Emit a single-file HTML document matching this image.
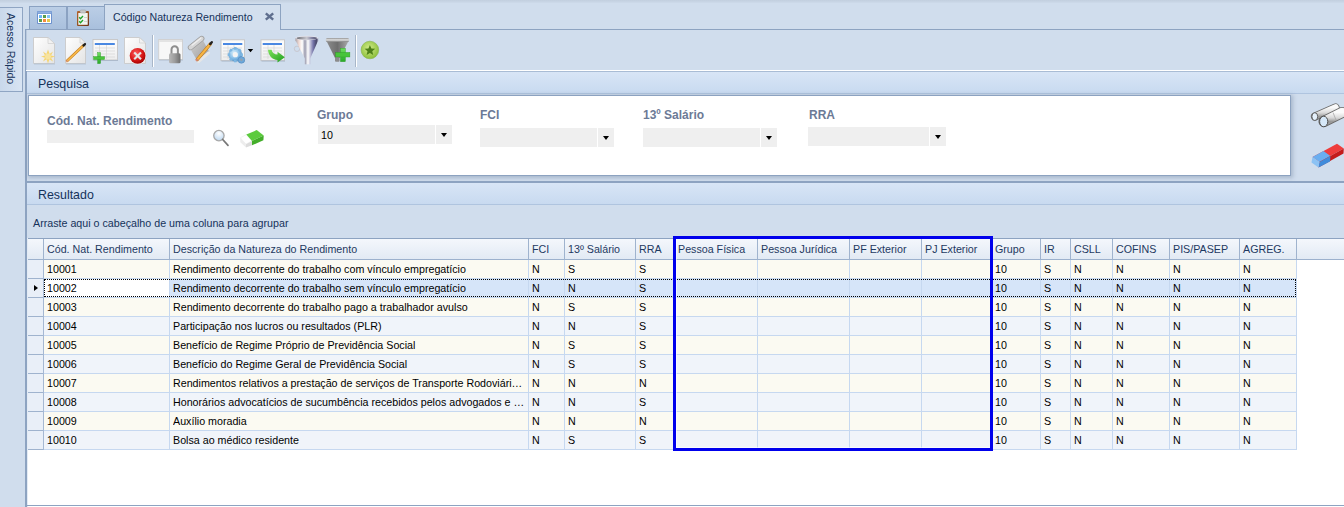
<!DOCTYPE html>
<html><head><meta charset="utf-8">
<style>
*{box-sizing:border-box;margin:0;padding:0}
html,body{width:1344px;height:507px;overflow:hidden}
body{position:relative;background:#D0DDED;font-family:"Liberation Sans",sans-serif;font-size:11px;color:#000}
.a{position:absolute}
.topline{left:0;top:0;width:1344px;height:3px;background:linear-gradient(#C2CFDF,#C7D4E4 50%,#CDDAEA)}
/* left quick access tab */
#qa{left:0;top:7px;width:23px;height:85px;border:1px solid #8FA5C3;border-left:none;background:linear-gradient(90deg,#C9D8EB,#D8E4F3)}
#qa span{position:absolute;left:5px;top:5px;transform-origin:0 0;transform:translate(12px,0) rotate(90deg);white-space:nowrap;color:#15325A;font-size:10.6px;line-height:12px}
/* tabs */
.tab{top:6px;height:23px;border:1px solid #8BA2C2;border-bottom:none;background:linear-gradient(#BBCEE6,#A9C0DD)}
#tab3{left:104px;top:4px;width:177px;height:26px;border:1px solid #8DA3C1;border-bottom:none;background:#D3DFEE}
#tab3 .t{position:absolute;left:8px;top:6px;color:#15325A;font-size:10.6px;line-height:12px;white-space:nowrap}
/* main panel */
#main{left:25px;top:29px;width:1319px;height:478px;border-left:1px solid #8DA3C1;border-top:1px solid #8DA3C1}
#main2{left:26px;top:71px;width:1px;height:436px;background:#8DA3C1}
#main3{left:26px;top:30px;width:1px;height:40px;background:#B9C9DD}
#tbline{left:26px;top:70px;width:1318px;height:1px;background:#fff}
#tbline2{left:27px;top:71px;width:1317px;height:1px;background:#A9BCD5}
.grphdr{height:22px;background:linear-gradient(#D8E5F6,#C8DAF0);border-bottom:1px solid #AFC4DF}
.grphdr span{position:absolute;left:11px;top:5px;font-size:12.4px;color:#15325A;line-height:14px}

.ghdr{background:linear-gradient(#F4F7FC,#E2EAF4);border-top:1px solid #8DA3C1;border-bottom:1px solid #9CB1CD}
.hsep{width:1px;background:#9FB3CE}
.htx{height:20px;line-height:20px;font-size:10.7px;color:#1E3961;white-space:nowrap}
.ind{width:15px;height:18px;background:#E9EFF8}
.iln{width:15px;height:1px;background:#9FB3CE}
.rln{width:1252px;height:1px;background:#C6D8F0}
.vln{width:1px;height:190px;background:#C6D8F0}
.ctx{height:18px;line-height:18px;font-size:10.7px;color:#000;white-space:nowrap;overflow:hidden;text-overflow:ellipsis}
.arrow{width:0;height:0;border-top:3.5px solid transparent;border-bottom:3.5px solid transparent;border-left:4px solid #000}
.focus{border-top:1px dotted #000;border-bottom:1px dotted #000;border-right:1px dotted #000;border-left:1px dotted #000}

.lbl{font-size:12px;font-weight:bold;color:#6C7A96;white-space:nowrap;line-height:14px}
.inp{background:#EFEFEF}
.cbtn{background:#EFEFEF}
.carr{width:0;height:0;border-left:3px solid transparent;border-right:3px solid transparent;border-top:4px solid #000}
.ctx2{font-size:10.7px;line-height:14px;color:#000}
</style></head><body>
<div class="a topline"></div>
<div class="a" id="qa"><span>Acesso Rápido</span></div>

<div class="a tab" style="left:29px;width:38px;border-right:1px solid #8BA2C2"></div>
<div class="a tab" style="left:67px;width:38px"></div>
<div class="a" id="main"></div><div class="a" id="main2"></div><div class="a" id="main3"></div>
<div class="a" id="tab3"><span class="t">Código Natureza Rendimento</span></div>
<div class="a" id="tbline"></div>
<div class="a" id="tbline2"></div>

<!-- Pesquisa -->
<div class="a grphdr" style="left:27px;top:72px;width:1317px"><span>Pesquisa</span></div>
<div class="a" style="left:28px;top:95px;width:1263px;height:81px;background:#fff;border:1px solid #8CA2C0;box-shadow:1px 1px 4px 1px rgba(120,138,165,0.45)"></div>
<div class="a" style="left:25px;top:181px;width:1319px;height:2px;background:#8DA3C1"></div>


<div class="a lbl" style="left:47px;top:114px">Cód. Nat. Rendimento</div>
<div class="a inp" style="left:47px;top:130px;width:147px;height:13px"></div>
<div class="a lbl" style="left:317px;top:108px">Grupo</div>
<div class="a inp" style="left:318px;top:125px;width:117px;height:19px"></div>
<div class="a cbtn" style="left:436px;top:125px;width:16px;height:19px"></div>
<div class="a carr" style="left:441px;top:133px"></div>
<div class="a ctx2" style="left:321px;top:128px">10</div>
<div class="a lbl" style="left:480px;top:108px">FCI</div>
<div class="a inp" style="left:480px;top:128px;width:117px;height:19px"></div>
<div class="a cbtn" style="left:598px;top:128px;width:16px;height:19px"></div>
<div class="a carr" style="left:603px;top:136px"></div>
<div class="a lbl" style="left:643px;top:108px">13º Salário</div>
<div class="a inp" style="left:643px;top:128px;width:117px;height:19px"></div>
<div class="a cbtn" style="left:761px;top:128px;width:16px;height:19px"></div>
<div class="a carr" style="left:766px;top:136px"></div>
<div class="a lbl" style="left:809px;top:108px">RRA</div>
<div class="a inp" style="left:808px;top:127px;width:121px;height:19px"></div>
<div class="a cbtn" style="left:930px;top:127px;width:16px;height:19px"></div>
<div class="a carr" style="left:935px;top:135px"></div>

<!-- Resultado -->
<div class="a grphdr" style="left:27px;top:183px;width:1317px"><span>Resultado</span></div>
<div class="a" style="left:33px;top:217px;font-size:10.7px;color:#15325A;white-space:nowrap">Arraste aqui o cabeçalho de uma coluna para agrupar</div>
<div class="a" style="left:27px;top:238px;width:1317px;height:269px;background:#fff;border-left:1px solid #E3EBF5"></div>
<div class="a" style="left:25px;top:505px;width:1319px;height:1px;background:#8DA3C1"></div>
<div class="a ghdr" style="left:28px;top:238px;width:1316px;height:22px"></div>
<div class="a hsep" style="left:43px;top:239px;height:20px"></div>
<div class="a hsep" style="left:169px;top:239px;height:20px"></div>
<div class="a htx" style="left:47px;top:239px">Cód. Nat. Rendimento</div>
<div class="a hsep" style="left:528px;top:239px;height:20px"></div>
<div class="a htx" style="left:173px;top:239px">Descrição da Natureza do Rendimento</div>
<div class="a hsep" style="left:564px;top:239px;height:20px"></div>
<div class="a htx" style="left:532px;top:239px">FCI</div>
<div class="a hsep" style="left:635px;top:239px;height:20px"></div>
<div class="a htx" style="left:568px;top:239px">13º Salário</div>
<div class="a hsep" style="left:674px;top:239px;height:20px"></div>
<div class="a htx" style="left:639px;top:239px">RRA</div>
<div class="a hsep" style="left:757px;top:239px;height:20px"></div>
<div class="a htx" style="left:678px;top:239px">Pessoa Física</div>
<div class="a hsep" style="left:849px;top:239px;height:20px"></div>
<div class="a htx" style="left:761px;top:239px">Pessoa Jurídica</div>
<div class="a hsep" style="left:921px;top:239px;height:20px"></div>
<div class="a htx" style="left:853px;top:239px">PF Exterior</div>
<div class="a hsep" style="left:991px;top:239px;height:20px"></div>
<div class="a htx" style="left:925px;top:239px">PJ Exterior</div>
<div class="a hsep" style="left:1040px;top:239px;height:20px"></div>
<div class="a htx" style="left:995px;top:239px">Grupo</div>
<div class="a hsep" style="left:1070px;top:239px;height:20px"></div>
<div class="a htx" style="left:1044px;top:239px">IR</div>
<div class="a hsep" style="left:1112px;top:239px;height:20px"></div>
<div class="a htx" style="left:1074px;top:239px">CSLL</div>
<div class="a hsep" style="left:1169px;top:239px;height:20px"></div>
<div class="a htx" style="left:1116px;top:239px">COFINS</div>
<div class="a hsep" style="left:1239px;top:239px;height:20px"></div>
<div class="a htx" style="left:1173px;top:239px">PIS/PASEP</div>
<div class="a hsep" style="left:1296px;top:239px;height:20px"></div>
<div class="a htx" style="left:1243px;top:239px">AGREG.</div>
<div class="a" style="left:44px;top:260px;width:1252px;height:18px;background:#FBFAF2"></div>
<div class="a ind" style="left:28px;top:260px"></div>
<div class="a iln" style="left:28px;top:278px"></div>
<div class="a rln" style="left:44px;top:278px"></div>
<div class="a ctx" style="left:47px;top:260px;width:121px">10001</div>
<div class="a ctx" style="left:173px;top:260px;width:354px">Rendimento decorrente do trabalho com vínculo empregatício</div>
<div class="a ctx" style="left:532px;top:260px;width:31px">N</div>
<div class="a ctx" style="left:568px;top:260px;width:66px">S</div>
<div class="a ctx" style="left:639px;top:260px;width:34px">S</div>
<div class="a ctx" style="left:995px;top:260px;width:44px">10</div>
<div class="a ctx" style="left:1044px;top:260px;width:25px">S</div>
<div class="a ctx" style="left:1074px;top:260px;width:37px">N</div>
<div class="a ctx" style="left:1116px;top:260px;width:52px">N</div>
<div class="a ctx" style="left:1173px;top:260px;width:65px">N</div>
<div class="a ctx" style="left:1243px;top:260px;width:52px">N</div>
<div class="a" style="left:44px;top:279px;width:1252px;height:18px;background:#D6E5F9"></div>
<div class="a ind" style="left:28px;top:279px"></div>
<div class="a iln" style="left:28px;top:297px"></div>
<div class="a rln" style="left:44px;top:297px"></div>
<div class="a" style="left:44px;top:279px;width:125px;height:18px;background:#fff"></div>
<div class="a arrow" style="left:34px;top:285px"></div>
<div class="a ctx" style="left:47px;top:279px;width:121px">10002</div>
<div class="a ctx" style="left:173px;top:279px;width:354px">Rendimento decorrente do trabalho sem vínculo empregatício</div>
<div class="a ctx" style="left:532px;top:279px;width:31px">N</div>
<div class="a ctx" style="left:568px;top:279px;width:66px">N</div>
<div class="a ctx" style="left:639px;top:279px;width:34px">S</div>
<div class="a ctx" style="left:995px;top:279px;width:44px">10</div>
<div class="a ctx" style="left:1044px;top:279px;width:25px">S</div>
<div class="a ctx" style="left:1074px;top:279px;width:37px">N</div>
<div class="a ctx" style="left:1116px;top:279px;width:52px">N</div>
<div class="a ctx" style="left:1173px;top:279px;width:65px">N</div>
<div class="a ctx" style="left:1243px;top:279px;width:52px">N</div>
<div class="a" style="left:44px;top:298px;width:1252px;height:18px;background:#FBFAF2"></div>
<div class="a ind" style="left:28px;top:298px"></div>
<div class="a iln" style="left:28px;top:316px"></div>
<div class="a rln" style="left:44px;top:316px"></div>
<div class="a ctx" style="left:47px;top:298px;width:121px">10003</div>
<div class="a ctx" style="left:173px;top:298px;width:354px">Rendimento decorrente do trabalho pago a trabalhador avulso</div>
<div class="a ctx" style="left:532px;top:298px;width:31px">N</div>
<div class="a ctx" style="left:568px;top:298px;width:66px">S</div>
<div class="a ctx" style="left:639px;top:298px;width:34px">S</div>
<div class="a ctx" style="left:995px;top:298px;width:44px">10</div>
<div class="a ctx" style="left:1044px;top:298px;width:25px">S</div>
<div class="a ctx" style="left:1074px;top:298px;width:37px">N</div>
<div class="a ctx" style="left:1116px;top:298px;width:52px">N</div>
<div class="a ctx" style="left:1173px;top:298px;width:65px">N</div>
<div class="a ctx" style="left:1243px;top:298px;width:52px">N</div>
<div class="a" style="left:44px;top:317px;width:1252px;height:18px;background:#F0F4FA"></div>
<div class="a ind" style="left:28px;top:317px"></div>
<div class="a iln" style="left:28px;top:335px"></div>
<div class="a rln" style="left:44px;top:335px"></div>
<div class="a ctx" style="left:47px;top:317px;width:121px">10004</div>
<div class="a ctx" style="left:173px;top:317px;width:354px">Participação nos lucros ou resultados (PLR)</div>
<div class="a ctx" style="left:532px;top:317px;width:31px">N</div>
<div class="a ctx" style="left:568px;top:317px;width:66px">N</div>
<div class="a ctx" style="left:639px;top:317px;width:34px">S</div>
<div class="a ctx" style="left:995px;top:317px;width:44px">10</div>
<div class="a ctx" style="left:1044px;top:317px;width:25px">S</div>
<div class="a ctx" style="left:1074px;top:317px;width:37px">N</div>
<div class="a ctx" style="left:1116px;top:317px;width:52px">N</div>
<div class="a ctx" style="left:1173px;top:317px;width:65px">N</div>
<div class="a ctx" style="left:1243px;top:317px;width:52px">N</div>
<div class="a" style="left:44px;top:336px;width:1252px;height:18px;background:#FBFAF2"></div>
<div class="a ind" style="left:28px;top:336px"></div>
<div class="a iln" style="left:28px;top:354px"></div>
<div class="a rln" style="left:44px;top:354px"></div>
<div class="a ctx" style="left:47px;top:336px;width:121px">10005</div>
<div class="a ctx" style="left:173px;top:336px;width:354px">Benefício de Regime Próprio de Previdência Social</div>
<div class="a ctx" style="left:532px;top:336px;width:31px">N</div>
<div class="a ctx" style="left:568px;top:336px;width:66px">S</div>
<div class="a ctx" style="left:639px;top:336px;width:34px">S</div>
<div class="a ctx" style="left:995px;top:336px;width:44px">10</div>
<div class="a ctx" style="left:1044px;top:336px;width:25px">S</div>
<div class="a ctx" style="left:1074px;top:336px;width:37px">N</div>
<div class="a ctx" style="left:1116px;top:336px;width:52px">N</div>
<div class="a ctx" style="left:1173px;top:336px;width:65px">N</div>
<div class="a ctx" style="left:1243px;top:336px;width:52px">N</div>
<div class="a" style="left:44px;top:355px;width:1252px;height:18px;background:#F0F4FA"></div>
<div class="a ind" style="left:28px;top:355px"></div>
<div class="a iln" style="left:28px;top:373px"></div>
<div class="a rln" style="left:44px;top:373px"></div>
<div class="a ctx" style="left:47px;top:355px;width:121px">10006</div>
<div class="a ctx" style="left:173px;top:355px;width:354px">Benefício do Regime Geral de Previdência Social</div>
<div class="a ctx" style="left:532px;top:355px;width:31px">N</div>
<div class="a ctx" style="left:568px;top:355px;width:66px">S</div>
<div class="a ctx" style="left:639px;top:355px;width:34px">S</div>
<div class="a ctx" style="left:995px;top:355px;width:44px">10</div>
<div class="a ctx" style="left:1044px;top:355px;width:25px">S</div>
<div class="a ctx" style="left:1074px;top:355px;width:37px">N</div>
<div class="a ctx" style="left:1116px;top:355px;width:52px">N</div>
<div class="a ctx" style="left:1173px;top:355px;width:65px">N</div>
<div class="a ctx" style="left:1243px;top:355px;width:52px">N</div>
<div class="a" style="left:44px;top:374px;width:1252px;height:18px;background:#FBFAF2"></div>
<div class="a ind" style="left:28px;top:374px"></div>
<div class="a iln" style="left:28px;top:392px"></div>
<div class="a rln" style="left:44px;top:392px"></div>
<div class="a ctx" style="left:47px;top:374px;width:121px">10007</div>
<div class="a ctx" style="left:173px;top:374px;width:354px">Rendimentos relativos a prestação de serviços de Transporte Rodoviário Internacional de Carga</div>
<div class="a ctx" style="left:532px;top:374px;width:31px">N</div>
<div class="a ctx" style="left:568px;top:374px;width:66px">N</div>
<div class="a ctx" style="left:639px;top:374px;width:34px">N</div>
<div class="a ctx" style="left:995px;top:374px;width:44px">10</div>
<div class="a ctx" style="left:1044px;top:374px;width:25px">S</div>
<div class="a ctx" style="left:1074px;top:374px;width:37px">N</div>
<div class="a ctx" style="left:1116px;top:374px;width:52px">N</div>
<div class="a ctx" style="left:1173px;top:374px;width:65px">N</div>
<div class="a ctx" style="left:1243px;top:374px;width:52px">N</div>
<div class="a" style="left:44px;top:393px;width:1252px;height:18px;background:#F0F4FA"></div>
<div class="a ind" style="left:28px;top:393px"></div>
<div class="a iln" style="left:28px;top:411px"></div>
<div class="a rln" style="left:44px;top:411px"></div>
<div class="a ctx" style="left:47px;top:393px;width:121px">10008</div>
<div class="a ctx" style="left:173px;top:393px;width:354px">Honorários advocatícios de sucumbência recebidos pelos advogados e procuradores</div>
<div class="a ctx" style="left:532px;top:393px;width:31px">N</div>
<div class="a ctx" style="left:568px;top:393px;width:66px">N</div>
<div class="a ctx" style="left:639px;top:393px;width:34px">S</div>
<div class="a ctx" style="left:995px;top:393px;width:44px">10</div>
<div class="a ctx" style="left:1044px;top:393px;width:25px">S</div>
<div class="a ctx" style="left:1074px;top:393px;width:37px">N</div>
<div class="a ctx" style="left:1116px;top:393px;width:52px">N</div>
<div class="a ctx" style="left:1173px;top:393px;width:65px">N</div>
<div class="a ctx" style="left:1243px;top:393px;width:52px">N</div>
<div class="a" style="left:44px;top:412px;width:1252px;height:18px;background:#FBFAF2"></div>
<div class="a ind" style="left:28px;top:412px"></div>
<div class="a iln" style="left:28px;top:430px"></div>
<div class="a rln" style="left:44px;top:430px"></div>
<div class="a ctx" style="left:47px;top:412px;width:121px">10009</div>
<div class="a ctx" style="left:173px;top:412px;width:354px">Auxílio moradia</div>
<div class="a ctx" style="left:532px;top:412px;width:31px">N</div>
<div class="a ctx" style="left:568px;top:412px;width:66px">N</div>
<div class="a ctx" style="left:639px;top:412px;width:34px">N</div>
<div class="a ctx" style="left:995px;top:412px;width:44px">10</div>
<div class="a ctx" style="left:1044px;top:412px;width:25px">S</div>
<div class="a ctx" style="left:1074px;top:412px;width:37px">N</div>
<div class="a ctx" style="left:1116px;top:412px;width:52px">N</div>
<div class="a ctx" style="left:1173px;top:412px;width:65px">N</div>
<div class="a ctx" style="left:1243px;top:412px;width:52px">N</div>
<div class="a" style="left:44px;top:431px;width:1252px;height:18px;background:#F0F4FA"></div>
<div class="a ind" style="left:28px;top:431px"></div>
<div class="a iln" style="left:28px;top:449px"></div>
<div class="a rln" style="left:44px;top:449px"></div>
<div class="a ctx" style="left:47px;top:431px;width:121px">10010</div>
<div class="a ctx" style="left:173px;top:431px;width:354px">Bolsa ao médico residente</div>
<div class="a ctx" style="left:532px;top:431px;width:31px">N</div>
<div class="a ctx" style="left:568px;top:431px;width:66px">S</div>
<div class="a ctx" style="left:639px;top:431px;width:34px">S</div>
<div class="a ctx" style="left:995px;top:431px;width:44px">10</div>
<div class="a ctx" style="left:1044px;top:431px;width:25px">S</div>
<div class="a ctx" style="left:1074px;top:431px;width:37px">N</div>
<div class="a ctx" style="left:1116px;top:431px;width:52px">N</div>
<div class="a ctx" style="left:1173px;top:431px;width:65px">N</div>
<div class="a ctx" style="left:1243px;top:431px;width:52px">N</div>
<div class="a vln" style="left:169px;top:260px"></div>
<div class="a vln" style="left:528px;top:260px"></div>
<div class="a vln" style="left:564px;top:260px"></div>
<div class="a vln" style="left:635px;top:260px"></div>
<div class="a vln" style="left:674px;top:260px"></div>
<div class="a vln" style="left:757px;top:260px"></div>
<div class="a vln" style="left:849px;top:260px"></div>
<div class="a vln" style="left:921px;top:260px"></div>
<div class="a vln" style="left:991px;top:260px"></div>
<div class="a vln" style="left:1040px;top:260px"></div>
<div class="a vln" style="left:1070px;top:260px"></div>
<div class="a vln" style="left:1112px;top:260px"></div>
<div class="a vln" style="left:1169px;top:260px"></div>
<div class="a vln" style="left:1239px;top:260px"></div>
<div class="a vln" style="left:1296px;top:260px"></div>
<div class="a" style="left:43px;top:260px;width:1px;height:190px;background:#A5B8D3"></div>
<div class="a focus" style="left:44px;top:279px;width:1252px;height:18px"></div>
<div class="a" style="left:676px;top:239px;width:314px;height:209px;border-left:1px solid rgba(255,255,255,.6);border-bottom:1px solid rgba(255,255,255,.6)"></div>
<div class="a" style="left:673px;top:236px;width:320px;height:215px;border:3px solid #0000EC"></div>
<svg class="a" style="left:0;top:0;pointer-events:none" width="1344" height="507" viewBox="0 0 1344 507">
<defs>
 <linearGradient id="gdoc" x1="0" y1="0" x2="1" y2="1"><stop offset="0" stop-color="#FFFFFF"/><stop offset="1" stop-color="#E4E4E4"/></linearGradient>
 <linearGradient id="gtbl" x1="0" y1="0" x2="0" y2="1"><stop offset="0" stop-color="#F6F6F6"/><stop offset="0.15" stop-color="#FCFCFC"/><stop offset="1" stop-color="#EDEDED"/></linearGradient>
 <radialGradient id="gred" cx="0.4" cy="0.35" r="0.7"><stop offset="0" stop-color="#FF6060"/><stop offset="0.6" stop-color="#D81818"/><stop offset="1" stop-color="#9E0000"/></radialGradient>
 <linearGradient id="glock" x1="0" y1="0" x2="1" y2="0"><stop offset="0" stop-color="#B8B8B8"/><stop offset="0.5" stop-color="#9C9C9C"/><stop offset="1" stop-color="#6E6E6E"/></linearGradient>
 <linearGradient id="gscroll" x1="0" y1="0" x2="1" y2="1"><stop offset="0" stop-color="#D2D2D2"/><stop offset="1" stop-color="#9A9A9A"/></linearGradient>
 <radialGradient id="ggear" cx="0.4" cy="0.35" r="0.65"><stop offset="0" stop-color="#D8EEFA"/><stop offset="0.6" stop-color="#8CC2EA"/><stop offset="1" stop-color="#5A9AD0"/></radialGradient>
 <linearGradient id="garrow" x1="0" y1="0" x2="1" y2="1"><stop offset="0" stop-color="#7CE05A"/><stop offset="1" stop-color="#1E9E1E"/></linearGradient>
 <linearGradient id="gfun" gradientUnits="userSpaceOnUse" x1="295.4" y1="0" x2="318.2" y2="0"><stop offset="0" stop-color="#A8A2A8"/><stop offset="0.15" stop-color="#EED8D2"/><stop offset="0.3" stop-color="#FFFFFF"/><stop offset="0.42" stop-color="#9A9AAE"/><stop offset="0.55" stop-color="#FFFFFF"/><stop offset="0.78" stop-color="#7474A8"/><stop offset="0.92" stop-color="#48486A"/><stop offset="1" stop-color="#A0A0B8"/></linearGradient>
 <linearGradient id="gfun2" x1="0" y1="0" x2="1" y2="0"><stop offset="0" stop-color="#8A8A8A"/><stop offset="0.5" stop-color="#6E6E6E"/><stop offset="1" stop-color="#A8A8A8"/></linearGradient>
 <linearGradient id="gfun2t" x1="0" y1="0" x2="0" y2="1"><stop offset="0" stop-color="#8E8E8E"/><stop offset="0.5" stop-color="#E4E4E4"/><stop offset="1" stop-color="#7A7A7A"/></linearGradient>
 <radialGradient id="gstar" cx="0.45" cy="0.4" r="0.6"><stop offset="0" stop-color="#D2EC8A"/><stop offset="1" stop-color="#8CBF3A"/></radialGradient>
 <linearGradient id="gplus" x1="0" y1="0" x2="0" y2="1"><stop offset="0" stop-color="#6FE05F"/><stop offset="1" stop-color="#27A827"/></linearGradient>
 <linearGradient id="gclip" x1="0" y1="0" x2="1" y2="1"><stop offset="0" stop-color="#B4642E"/><stop offset="0.5" stop-color="#94501F"/><stop offset="1" stop-color="#6A3016"/></linearGradient>
 <radialGradient id="gmag" cx="0.5" cy="0.3" r="0.7"><stop offset="0" stop-color="#FFFFFF"/><stop offset="1" stop-color="#BCD8F2"/></radialGradient>
 <linearGradient id="gbin" x1="0" y1="0" x2="0" y2="1"><stop offset="0" stop-color="#FAFAFA"/><stop offset="0.6" stop-color="#D8D8D8"/><stop offset="1" stop-color="#9A9A9A"/></linearGradient>
<linearGradient id="grim" x1="0" y1="0" x2="1" y2="0"><stop offset="0" stop-color="#6A6A70"/><stop offset="0.5" stop-color="#C8C8D0"/><stop offset="0.75" stop-color="#8080A0"/><stop offset="1" stop-color="#505068"/></linearGradient>
</defs>

<!-- tab 1 icon: grid -->
<rect x="37" y="11" width="15" height="13" rx="1" fill="#6C92CE"/>
<rect x="37.5" y="11.5" width="14" height="2" fill="#8FB0E0"/>
<rect x="38" y="14" width="13" height="9" fill="#FFFFFF"/>
<rect x="39" y="15" width="3" height="3" fill="#6DB7F6"/>
<rect x="43" y="15" width="3" height="3" fill="#5A9E4E"/>
<rect x="47" y="15" width="3" height="3" fill="#82C4F6"/>
<rect x="39" y="19" width="3" height="3" fill="#5A9E4E"/>
<rect x="43" y="19" width="3" height="3" fill="#F58A3C"/>
<rect x="47" y="19" width="3" height="3" fill="#E5C84A"/>

<!-- tab 2 icon: clipboard -->
<rect x="77" y="11" width="12" height="15" rx="1" fill="url(#gclip)"/>
<rect x="78.3" y="13" width="9.4" height="11.8" fill="#F1F5F1"/>
<rect x="80" y="10" width="6" height="3" rx="1.2" fill="#C8C8C8" stroke="#9A9A9A" stroke-width="0.5"/>
<path d="M79.2,17.3 l1.3,1.4 l2.5,-2.6" stroke="#1FA22A" stroke-width="1.4" fill="none"/>
<path d="M79.2,21.3 l1.3,1.4 l2.5,-2.6" stroke="#1FA22A" stroke-width="1.4" fill="none"/>
<rect x="84" y="17" width="3" height="0.8" fill="#C8CCC8"/>
<rect x="84" y="21" width="3" height="0.8" fill="#C8CCC8"/>

<!-- close x -->
<path d="M265.8,13.4 L273.2,19.6 M273.2,13.4 L265.8,19.6" stroke="#5F6E8E" stroke-width="2.5"/>

<!-- 1 new doc -->
<path d="M33.5,37.5 H48 L54.5,43.5 V63.5 H33.5 Z" fill="url(#gdoc)" stroke="#C9C9C9" stroke-width="0.9"/>
<path d="M48,37.5 V43.5 H54.5 Z" fill="#F2F2F2" stroke="#CFCFCF" stroke-width="0.7"/>
<rect x="34" y="63.5" width="21" height="1" fill="#A9B8CC" opacity="0.6"/>
<g transform="translate(48,56.5)" fill="#F6D46A" opacity="0.95">
<polygon points="0,-7 1.6,-2.5 5,-5 3,-1 7,0 3,1.2 5,5 1.4,2.8 0,7 -1.4,2.8 -5,5 -3,1.2 -7,0 -3,-1 -5,-5 -1.6,-2.5"/>
<circle r="3" fill="#F8E39A"/>
</g>

<!-- 2 edit doc -->
<path d="M65.5,37.5 H80 L85.5,43 V63.5 H65.5 Z" fill="url(#gdoc)" stroke="#C9C9C9" stroke-width="0.9"/>
<path d="M80,37.5 V43 H85.5 Z" fill="#F2F2F2" stroke="#CFCFCF" stroke-width="0.7"/>
<rect x="66" y="63.5" width="20" height="1" fill="#A9B8CC" opacity="0.6"/>
<path d="M67.2,60.8 L83.4,45.6" stroke="#C07A20" stroke-width="2.8" stroke-linecap="round"/>
<path d="M67.2,60.8 L83.4,45.6" stroke="#F7B848" stroke-width="1.7"/>
<path d="M83.4,45.6 L85,44.1" stroke="#1E1E1E" stroke-width="2.2" stroke-linecap="round"/>
<path d="M66.3,61.8 L67.6,60.5" stroke="#E0A088" stroke-width="1.6"/>

<!-- 3 table + plus -->
<rect x="93" y="39.5" width="24.5" height="20.5" fill="url(#gtbl)" stroke="#C6C6C6" stroke-width="0.9"/>
<rect x="93.5" y="60" width="24.5" height="1" fill="#9FAFC4" opacity="0.7"/>
<rect x="94.8" y="43" width="20" height="2" fill="#4A88E2"/>
<g stroke="#D6D6D6" stroke-width="0.7">
<path d="M95,48 H115 M95,51 H115 M95,54 H115 M95,57 H115 M99.5,45 V59 M106.5,45 V59"/>
</g>
<rect x="97.6" y="52.6" width="3" height="11" fill="url(#gplus)" stroke="#2C9A24" stroke-width="0.4"/>
<rect x="93.6" y="56.6" width="11" height="3" fill="#47C43A" stroke="#2C9A24" stroke-width="0.4"/>

<!-- 4 delete doc -->
<path d="M124.5,37.5 H139.5 L145.5,43 V63.5 H124.5 Z" fill="url(#gdoc)" stroke="#C9C9C9" stroke-width="0.9"/>
<path d="M139.5,37.5 V43 H145.5 Z" fill="#F2F2F2" stroke="#CFCFCF" stroke-width="0.7"/>
<circle cx="137.6" cy="55.8" r="8.6" fill="#F2F2F2" opacity="0.8"/>
<circle cx="137.6" cy="55.8" r="7.9" fill="url(#gred)"/>
<path d="M134.2,52.4 L141,59.2 M141,52.4 L134.2,59.2" stroke="#E6E6E6" stroke-width="2.1"/>

<!-- separator -->
<rect x="152" y="35" width="1" height="32" fill="#A8B6C8"/>
<rect x="153" y="35" width="1" height="32" fill="#FFFFFF"/>

<!-- 5 window lock -->
<rect x="158.7" y="39.5" width="23.8" height="20" fill="#F7F7F7" stroke="#CFCFCF" stroke-width="0.9"/>
<rect x="159.2" y="40" width="22.8" height="2" fill="#E3E3E3"/>
<rect x="159" y="59.6" width="24" height="1" fill="#A5B3C5" opacity="0.6"/>
<path d="M171.5,54 V49.5 A3.2,3.2 0 0 1 177.9,49.5 V54" stroke="#8E8E8E" stroke-width="2" fill="none"/>
<rect x="169" y="53.3" width="11.5" height="10" rx="1.5" fill="url(#glock)"/>

<!-- 6 scroll pencil -->
<polygon points="190,48.5 202,38.5 209.3,52 198,62" fill="url(#gscroll)"/>
<path d="M198.5,61.5 L208.5,52.8" stroke="#E6E6E6" stroke-width="3" stroke-linecap="round"/>
<path d="M190.6,47.4 L201.6,38.6" stroke="#9C9C9C" stroke-width="5.6" stroke-linecap="round"/>
<path d="M190.6,47.4 L201.6,38.6" stroke="#D6D6D6" stroke-width="4" stroke-linecap="round"/>
<path d="M192,45.2 L201,38" stroke="#EFEFEF" stroke-width="1.2" stroke-linecap="round"/>
<path d="M197.3,59.5 L210.3,44" stroke="#B8741C" stroke-width="3.4" stroke-linecap="round"/>
<path d="M197.3,59.5 L210.3,44" stroke="#F6B443" stroke-width="2.2"/>
<path d="M210.2,44.1 L211.8,42.2" stroke="#222" stroke-width="2.4" stroke-linecap="round"/>
<path d="M196.2,60.8 L197.6,59.2" stroke="#D88A78" stroke-width="2"/>

<!-- 7 table gear -->
<rect x="221" y="39.8" width="23.5" height="20.8" fill="url(#gtbl)" stroke="#C6C6C6" stroke-width="0.9"/>
<rect x="221.5" y="60.6" width="23.5" height="1" fill="#9FAFC4" opacity="0.7"/>
<rect x="223" y="43" width="19.3" height="2" fill="#4A88E2"/>
<g stroke="#D6D6D6" stroke-width="0.7"><path d="M223,48 H242 M223,51 H242 M223,54 H242 M223,57 H242 M228,45 V59 M234,45 V59"/></g>
<g transform="translate(235.3,54.7)">
<circle r="6.6" fill="url(#ggear)" stroke="#5B96C8" stroke-width="0.5"/>
<g fill="#7DB6E2"><rect x="-1.3" y="-7.6" width="2.6" height="2.5"/><rect x="-1.3" y="5.1" width="2.6" height="2.5"/><rect x="-7.6" y="-1.3" width="2.5" height="2.6"/><rect x="5.1" y="-1.3" width="2.5" height="2.6"/>
<rect x="-1.3" y="-7.6" width="2.6" height="2.5" transform="rotate(45)"/><rect x="-1.3" y="5.1" width="2.6" height="2.5" transform="rotate(45)"/><rect x="-7.6" y="-1.3" width="2.5" height="2.6" transform="rotate(45)"/><rect x="5.1" y="-1.3" width="2.5" height="2.6" transform="rotate(45)"/></g>
<circle r="2.6" fill="#F4F4F4"/>
</g>
<circle cx="241.4" cy="59.9" r="3.3" fill="#6FA8D8" stroke="#4F88BF" stroke-width="0.6"/>
<circle cx="241.4" cy="59.9" r="1.1" fill="#9AA0A8"/>
<polygon points="247.8,48.9 253.2,48.9 250.5,52.2" fill="#000"/>

<!-- 8 table arrow -->
<rect x="261" y="39.8" width="23.5" height="20.8" fill="url(#gtbl)" stroke="#C6C6C6" stroke-width="0.9"/>
<rect x="261.5" y="60.6" width="23.5" height="1" fill="#9FAFC4" opacity="0.7"/>
<rect x="262.7" y="43" width="19.3" height="2" fill="#4A88E2"/>
<g stroke="#D6D6D6" stroke-width="0.7"><path d="M263,48 H282 M263,51 H282 M263,54 H282 M263,57 H282 M268,45 V59 M274,45 V59"/></g>
<path d="M268,49.8 C268.5,55.8 272.2,59.9 277.5,59.9 L277.5,62.6 L284.8,57.3 L277.5,51.8 L277.5,54.6 C274.4,54.6 272,53 271.6,49.8 Z" fill="url(#garrow)"/>

<!-- 9 funnel silver -->
<circle cx="297" cy="48.8" r="2.7" fill="none" stroke="#C8C8D0" stroke-width="1"/>
<path d="M295.6,40.5 L318.2,40.5 L310.3,58.2 L304.8,58.2 Z" fill="url(#gfun)"/>
<rect x="295.4" y="38" width="22.8" height="3.2" fill="url(#gfun)"/>
<rect x="304.8" y="57.5" width="5.5" height="6.8" fill="url(#gfun)"/>
<ellipse cx="306.8" cy="38" rx="11.4" ry="2.2" fill="#E8E8F0"/>
<ellipse cx="306.8" cy="38.2" rx="10.4" ry="1.6" fill="url(#grim)"/>

<!-- 10 funnel grey plus -->
<path d="M327,42 L348,42 L339.6,58 L335,58 Z" fill="url(#gfun2)"/>
<rect x="335" y="57" width="4.6" height="4.7" rx="1" fill="#8C8C8C"/>
<rect x="325.8" y="37.9" width="23.3" height="4.1" rx="1.5" fill="url(#gfun2t)"/>
<rect x="340.4" y="48.2" width="5" height="13.5" fill="url(#gplus)" stroke="#2C9A24" stroke-width="0.4"/>
<rect x="335.6" y="52.4" width="14.3" height="4.6" fill="#47C43A" stroke="#2C9A24" stroke-width="0.4"/>

<!-- separator -->
<rect x="355" y="35" width="1" height="32" fill="#A8B6C8"/>
<rect x="356" y="35" width="1" height="32" fill="#FFFFFF"/>

<!-- 11 star circle -->
<circle cx="369.9" cy="50" r="8.8" fill="url(#gstar)" stroke="#84B448" stroke-width="0.6"/>
<polygon transform="translate(369.9,50.5)" points="0,-5.6 1.5,-1.9 5.3,-1.8 2.4,0.8 3.3,4.6 0,2.6 -3.3,4.6 -2.4,0.8 -5.3,-1.8 -1.5,-1.9" fill="#4E8018"/>

<!-- magnifier -->
<circle cx="218.9" cy="135.6" r="5.2" fill="url(#gmag)" stroke="#A8A8A8" stroke-width="1.3"/>
<path d="M222.7,139.5 L228,145.4" stroke="#777" stroke-width="1.7" stroke-linecap="round"/>

<!-- green eraser -->
<polygon points="240.3,137.8 246.3,134.6 252,140.9 246,144.2" fill="#FFFFFF" stroke="#E4E4E4" stroke-width="0.5"/>
<polygon points="240.3,137.8 246,144.2 246,147.6 240.3,142.2" fill="#EDEDED"/>
<polygon points="246,144.2 252,140.9 252,145.3 246,147.6" fill="#DCDCDC"/>
<polygon points="246.3,134.6 256.7,130.1 263.7,135.6 252,140.9" fill="#5CCB3E"/>
<polygon points="252,140.9 263.7,135.6 263.4,140.3 252,145.3" fill="#43AE2A"/>

<!-- binoculars -->
<path d="M1315,116.5 L1335.5,107.5" stroke="#6A6A6A" stroke-width="8.2" stroke-linecap="round"/>
<path d="M1315,116.5 L1335.5,107.5" stroke="url(#gbin)" stroke-width="6.6" stroke-linecap="round"/>
<ellipse cx="1314.8" cy="116.6" rx="2.9" ry="3.9" fill="#E4F0FB" stroke="#555" stroke-width="0.9"/>
<path d="M1324,121.5 L1342,112.5" stroke="#666" stroke-width="11" stroke-linecap="round"/>
<path d="M1324,121.5 L1342,112.5" stroke="url(#gbin)" stroke-width="9.4" stroke-linecap="round"/>
<path d="M1333,112.5 L1336,120" stroke="#A8A8A8" stroke-width="0.8"/>
<ellipse cx="1323.7" cy="121.5" rx="4.1" ry="5.3" fill="#D6E8F8" stroke="#4A4A4A" stroke-width="1"/>

<!-- red/blue eraser -->
<polygon points="1312.5,157 1337,143.8 1343.8,148.5 1319.5,162" fill="#EE3C3C"/>
<polygon points="1312.5,157 1323.5,151 1330.4,156 1319.5,162" fill="#6AAEF0"/>
<polygon points="1319.5,162 1343.8,148.5 1343.5,153.5 1318.5,167.5" fill="#C41A1A"/>
<polygon points="1319.5,162 1330.4,156 1330,161.5 1318.5,167.5" fill="#3F8BDB"/>
<polygon points="1312.5,157 1319.5,162 1318.5,167.5 1311.5,162.5" fill="#8CC2F4"/>
</svg>

</body></html>
